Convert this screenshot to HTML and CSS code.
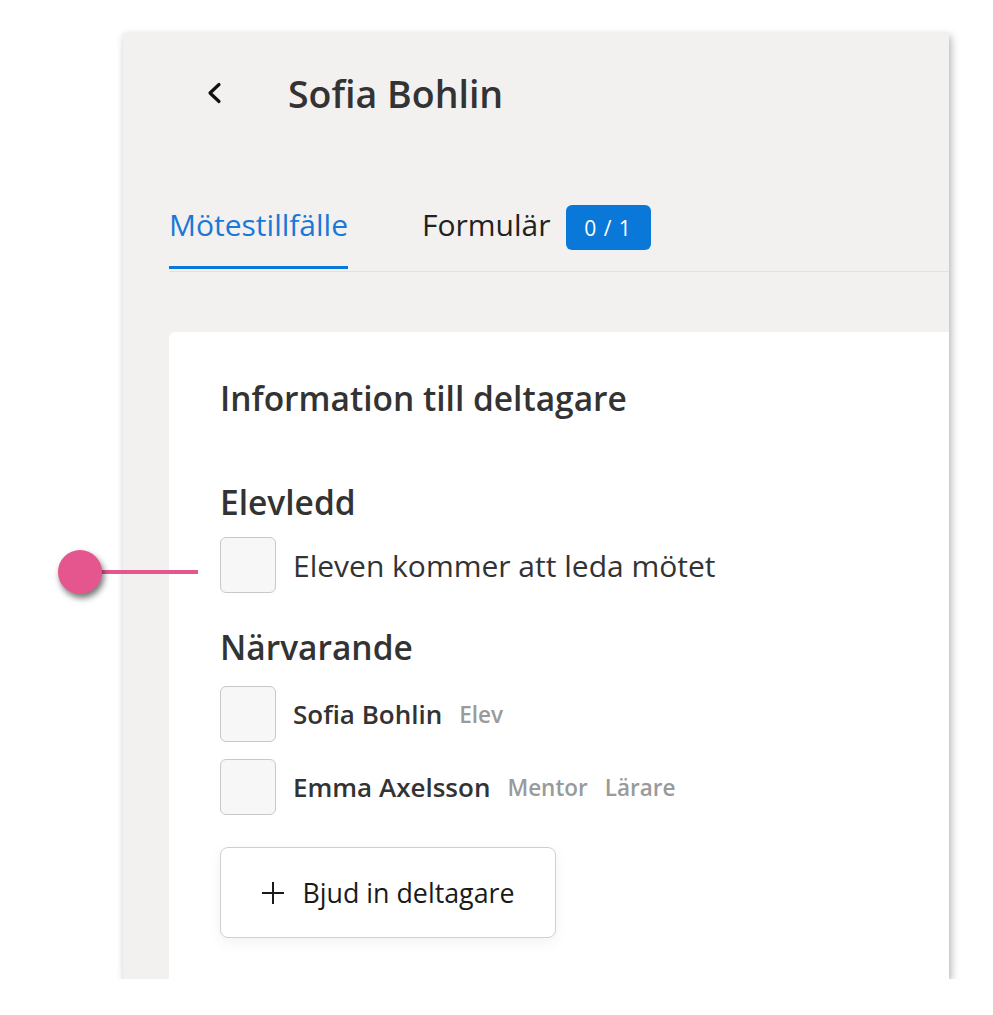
FILE: index.html
```html
<!DOCTYPE html>
<html lang="sv">
<head>
    <meta charset="UTF-8">
    <meta name="viewport" content="width=device-width, initial-scale=1.0">
    <title>Sofia Bohlin - Möte</title>
    <link rel="stylesheet" href="styles.css">
</head>
<body>

<div class="frame">
    <div class="header">
        <button class="back" aria-label="Tillbaka">
            <svg width="16" height="22" viewBox="0 0 16 22">
                <path d="M13 2.5 L4 11 L13 19.5" fill="none" stroke="#111" stroke-width="3.2" stroke-linecap="round" stroke-linejoin="round"/>
            </svg>
        </button>
        <h1>Sofia Bohlin</h1>
    </div>

    <div class="tabs">
        <div class="tab active">Mötestillfälle</div>
        <div class="tab">Formulär <span class="badge">0 / 1</span></div>
    </div>

    <div class="card">
        <h2>Information till deltagare</h2>

        <h3>Elevledd</h3>
        <label class="check-row">
            <span class="box"></span>
            <span class="check-label">Eleven kommer att leda mötet</span>
        </label>

        <h3 class="present">Närvarande</h3>
        <div class="person">
            <span class="box"></span>
            <span class="name">Sofia Bohlin</span>
            <span class="role">Elev</span>
        </div>
        <div class="person">
            <span class="box"></span>
            <span class="name">Emma Axelsson</span>
            <span class="role">Mentor</span>
            <span class="role">Lärare</span>
        </div>

        <button class="invite">
            <svg width="24" height="24" viewBox="0 0 24 24">
                <path d="M12 1 V23 M1 12 H23" stroke="#1a1a1a" stroke-width="2"/>
            </svg>
            Bjud in deltagare
        </button>
    </div>
</div>

<!-- annotation marker pointing at the checkbox -->
<div class="marker">
    <span class="marker-dot"></span>
    <span class="marker-line"></span>
</div>

</body>
</html>
```

FILE: styles.css
```css
body {
    font-family: "Open Sans", "Noto Sans", sans-serif;
    background-color: #fff;
    margin: 0;
    padding: 33px 0 0 123px;
    color: #333;
}

.frame {
    width: 826px;
    height: 946px;
    background-color: #f2f1ef;
    overflow: hidden;
    box-shadow: 2px 3px 8px rgba(0, 0, 0, 0.3);
    display: flex;
    flex-direction: column;
}

.header {
    height: 120px;
    display: flex;
    align-items: center;
    padding-left: 83px;
}

.back {
    background: none;
    border: none;
    padding: 0;
    width: 16px;
    height: 22px;
    margin-right: 66px;
    cursor: pointer;
}

.header h1 {
    margin: 0;
    font-size: 37.5px;
    font-weight: 600;
    color: #333;
}

.tabs {
    margin: 49px 0 0 46px;
    display: flex;
    gap: 74px;
    border-bottom: 1px solid #e2e0e6;
}

.tab {
    font-size: 30px;
    line-height: 40px;
    padding-bottom: 19px;
    border-bottom: 3px solid transparent;
    margin-bottom: 2px;
    color: #222;
    display: flex;
    align-items: center;
}

.tab.active {
    color: #1a78d6;
    border-bottom-color: #0a77d9;
}

.badge {
    margin: 3px 0 -3px 15px;
    background-color: #0a78d9;
    color: #fff;
    font-size: 21px;
    letter-spacing: 1px;
    border-radius: 6px;
    height: 45px;
    width: 85px;
    display: flex;
    align-items: center;
    justify-content: center;
}

.card {
    margin: 60px 0 0 46px;
    flex: 1;
    background-color: #fff;
    border-radius: 6px 0 0 0;
    padding: 44px 0 0 51px;
}

.card h2 {
    margin: 0;
    font-size: 33.5px;
    line-height: 44px;
    font-weight: 600;
    color: #333;
}

.card h3 {
    margin: 62px 0 15px;
    font-size: 33.5px;
    line-height: 40px;
    font-weight: 600;
    color: #333;
}

.card h3.present {
    margin: 34px 0 19px;
}

.box {
    width: 54px;
    height: 54px;
    border: 1px solid #c8c8c8;
    border-radius: 6px;
    background-color: #f7f7f7;
    flex-shrink: 0;
}

.check-row {
    display: flex;
    align-items: center;
}

.check-label {
    margin-left: 17px;
    font-size: 30px;
    color: #333;
}

.person {
    display: flex;
    align-items: center;
    margin-bottom: 17px;
}

.person .name {
    margin-left: 17px;
    font-size: 26px;
    font-weight: 600;
    color: #333;
}

.person .role {
    margin-left: 17px;
    font-size: 22.5px;
    font-weight: 600;
    color: #9a9a9a;
}

.invite {
    margin-top: 32px;
    width: 336px;
    height: 91px;
    background-color: #fff;
    border: 1px solid #cfcfcf;
    border-radius: 8px;
    box-shadow: 0 4px 14px rgba(0, 0, 0, 0.06);
    font-family: inherit;
    font-size: 26.8px;
    color: #1a1a1a;
    display: flex;
    align-items: center;
    justify-content: center;
    gap: 17px;
    cursor: pointer;
}

.marker {
    position: absolute;
    left: 58px;
    top: 550px;
    display: flex;
    align-items: center;
}

.marker-dot {
    width: 44px;
    height: 44px;
    border-radius: 50%;
    background-color: #e5568e;
    box-shadow: 2px 4px 6px rgba(0, 0, 0, 0.55);
    position: relative;
    z-index: 1;
}

.marker-line {
    width: 100px;
    height: 4px;
    margin-left: -4px;
    background-color: #e5568e;
}
```
